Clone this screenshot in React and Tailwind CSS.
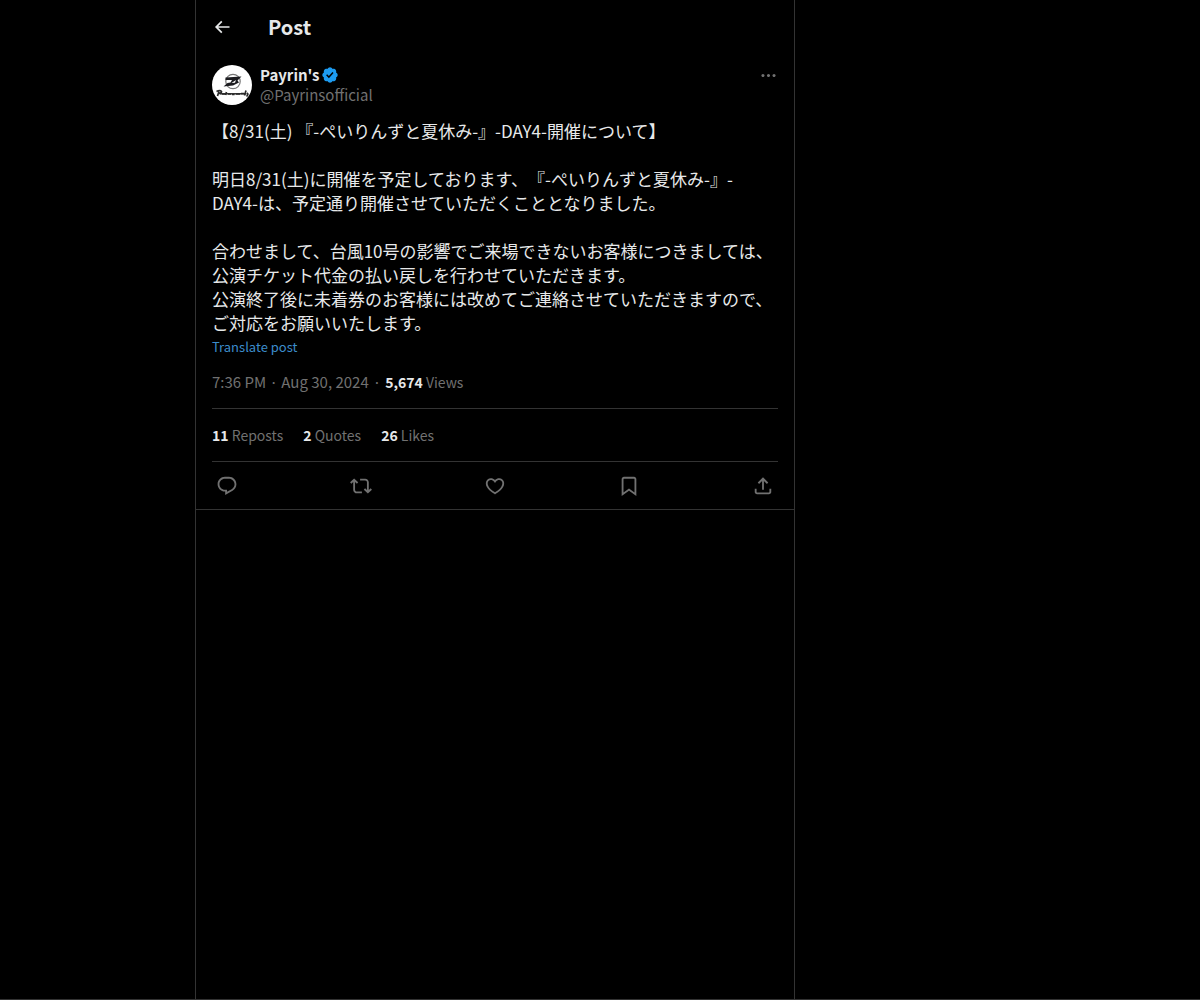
import clsx from "clsx";

const BODY = `【8/31(土) 『-ぺいりんずと夏休み-』-DAY4-開催について】

明日8/31(土)に開催を予定しております、『-ぺいりんずと夏休み-』-DAY4-は、予定通り開催させていただくこととなりました。

合わせまして、台風10号の影響でご来場できないお客様につきましては、公演チケット代金の払い戻しを行わせていただきます。
公演終了後に未着券のお客様には改めてご連絡させていただきますので、ご対応をお願いいたします。`;

const stats = [
  { count: "11", label: "Reposts" },
  { count: "2", label: "Quotes" },
  { count: "26", label: "Likes" },
];

const actions = [
  {
    name: "Reply",
    d: "M1.751 10c0-4.42 3.584-8 8.005-8h4.366c4.49 0 8.129 3.64 8.129 8.13 0 2.96-1.607 5.68-4.196 7.11l-8.054 4.46v-3.69h-.067c-4.49.1-8.183-3.51-8.183-8.01zm8.005-6c-3.317 0-6.005 2.69-6.005 6 0 3.37 2.77 6.08 6.138 6.01l.351-.01h1.761v2.3l5.087-2.81c1.951-1.08 3.163-3.13 3.163-5.36 0-3.39-2.744-6.13-6.129-6.13H9.756z",
  },
  {
    name: "Repost",
    d: "M4.5 3.88l4.432 4.14-1.364 1.46L5.5 7.55V16c0 1.1.896 2 2 2H13v2H7.5c-2.209 0-4-1.79-4-4V7.55L1.432 9.48.068 8.02 4.5 3.88zM16.5 6H11V4h5.5c2.209 0 4 1.79 4 4v8.45l2.068-1.93 1.364 1.46-4.432 4.14-4.432-4.14 1.364-1.46 2.068 1.93V8c0-1.1-.896-2-2-2z",
  },
  {
    name: "Like",
    d: "M16.697 5.5c-1.222-.06-2.679.51-3.89 2.16l-.805 1.09-.806-1.09C9.984 6.01 8.526 5.44 7.304 5.5c-1.243.07-2.349.78-2.91 1.91-.552 1.12-.633 2.78.479 4.82 1.074 1.97 3.257 4.27 7.129 6.61 3.87-2.34 6.052-4.64 7.126-6.61 1.111-2.04 1.03-3.7.477-4.82-.561-1.13-1.666-1.84-2.908-1.91zm4.187 7.69c-1.351 2.48-4.001 5.12-8.379 7.67l-.503.3-.504-.3c-4.379-2.55-7.029-5.19-8.382-7.67-1.36-2.5-1.41-4.86-.514-6.67.887-1.79 2.647-2.91 4.601-3.01 1.651-.09 3.368.56 4.798 2.01 1.429-1.45 3.146-2.1 4.796-2.01 1.954.1 3.714 1.22 4.601 3.01.896 1.81.846 4.17-.514 6.67z",
  },
  {
    name: "Bookmark",
    d: "M4 4.5C4 3.12 5.119 2 6.5 2h11C18.881 2 20 3.12 20 4.5v18.44l-8-5.71-8 5.71V4.5zM6.5 4c-.276 0-.5.22-.5.5v14.56l6-4.29 6 4.29V4.5c0-.28-.224-.5-.5-.5h-11z",
  },
  {
    name: "Share",
    d: "M12 2.59l5.7 5.7-1.41 1.42L13 6.41V16h-2V6.41l-3.3 3.3-1.41-1.42L12 2.59zM21 15l-.02 3.51c0 1.38-1.12 2.49-2.5 2.49H5.5C4.11 21 3 19.88 3 18.5V15h2v3.5c0 .28.22.5.5.5h12.98c.28 0 .5-.22.5-.5L19 15h2z",
  },
];

function Icon({ d, className }) {
  return (
    <svg viewBox="0 0 24 24" aria-hidden="true" className={clsx("fill-current", className)}>
      <path d={d} />
    </svg>
  );
}

function Avatar() {
  return (
    <svg viewBox="0 0 40 40" className="size-10 shrink-0" role="img" aria-label="Payrin's">
      <circle cx="20" cy="20" r="20" fill="#fff" />
      <circle cx="21" cy="16.5" r="7.2" fill="none" stroke="#777" strokeWidth="1.2" />
      <path d="M13.5 12.5 L29.5 11.5 L25.5 15.5 L27 17.5 L21 20.5 L11.5 21.5 L15.5 18 L18.5 17.5 L20 15 L13.5 15 Z" fill="#1c1c20" />
      <path d="M19.5 18 L24 15 L23 17.8 Z" fill="#fff" />
      <path
        d="M4.5 26.5 Q8 24.5 9.5 26.5 Q9.5 28.5 6.5 28.5 M7 26.5 L5.5 31 M10 29 h3 M14.5 27 l-1 3 M16 29 h3 M20 29.5 h2.5 M24 29 h4 M29 28.5 h3 M34 25.5 l-1.5 5 M35 28 Q37 29 34.5 31.5"
        fill="none"
        stroke="#2a2a2a"
        strokeWidth="1.7"
      />
      <path d="M8 28.8 H34.5" stroke="#2a2a2a" strokeWidth="1.5" />
    </svg>
  );
}

function VerifiedBadge() {
  return (
    <svg viewBox="0 0 22 22" className="size-[18px]" role="img" aria-label="Verified account">
      <path
        fill="#1d9bf0"
        d="M20.396 11c-.018-.646-.215-1.275-.57-1.816-.354-.54-.852-.972-1.438-1.246.223-.607.27-1.264.14-1.897-.131-.634-.437-1.218-.882-1.687-.47-.445-1.053-.75-1.687-.882-.633-.13-1.29-.083-1.897.14-.273-.587-.704-1.086-1.245-1.44S11.647 1.62 11 1.604c-.646.017-1.273.213-1.813.568s-.969.854-1.24 1.44c-.608-.223-1.267-.272-1.902-.14-.635.13-1.22.436-1.69.882-.445.47-.749 1.055-.878 1.688-.13.633-.08 1.29.144 1.896-.587.274-1.087.705-1.443 1.245-.356.54-.555 1.17-.574 1.817.02.647.218 1.276.574 1.817.356.54.856.972 1.443 1.245-.224.606-.274 1.263-.144 1.896.13.634.433 1.218.877 1.688.47.443 1.054.747 1.687.878.633.132 1.29.084 1.897-.136.274.586.705 1.084 1.246 1.439.54.354 1.17.551 1.816.569.647-.016 1.276-.213 1.817-.567s.972-.854 1.245-1.44c.604.239 1.266.296 1.903.164.636-.132 1.22-.447 1.68-.907.46-.46.776-1.044.908-1.681s.075-1.299-.165-1.903c.586-.274 1.084-.705 1.439-1.246.354-.54.551-1.17.569-1.816z"
      />
      <path fill="#000" d="M9.662 14.85l-3.429-3.428 1.293-1.302 2.072 2.072 4.4-4.794 1.347 1.246z" />
    </svg>
  );
}

function Header() {
  return (
    <header className="flex h-[53px] items-center px-4">
      <div className="w-14">
        <button type="button" aria-label="Back" className="block">
          <Icon className="size-5" d="M7.414 13l5.043 5.04-1.414 1.42L3.586 12l7.457-7.46 1.414 1.42L7.414 11H21v2H7.414z" />
        </button>
      </div>
      <h1 className="text-xl font-bold">Post</h1>
    </header>
  );
}

function Post() {
  return (
    <article className="border-b border-[#333333] px-4 pt-3">
      <div className="flex gap-2">
        <Avatar />
        <div className="flex-1 text-[15px] leading-5">
          <div className="flex items-center gap-px">
            <a href="#profile" className="font-bold">Payrin's</a>
            <VerifiedBadge />
          </div>
          <a href="#profile" className="block text-[#717171]">@Payrinsofficial</a>
        </div>
        <button type="button" aria-label="More" className="flex h-5 items-center text-[#717171]">
          <Icon
            className="size-[19px]"
            d="M3 12c0-1.1.9-2 2-2s2 .9 2 2-.9 2-2 2-2-.9-2-2zm9 2c1.1 0 2-.9 2-2s-.9-2-2-2-2 .9-2 2 .9 2 2 2zm7 0c1.1 0 2-.9 2-2s-.9-2-2-2-2 .9-2 2 .9 2 2 2z"
          />
        </button>
      </div>

      <p lang="ja" className="mt-3.5 text-[17px] leading-6 whitespace-pre-wrap [text-spacing-trim:space-all]">{BODY}</p>
      <button type="button" className="block text-[13px] leading-6 text-[#3c8ccb]">Translate post</button>

      <div className="pt-3 pb-4 text-[15px] leading-[21px] text-[#717171]">
        <a href="#post">7:36 PM · Aug 30, 2024</a>
        <span className="px-1">·</span>
        <span className="text-sm leading-5"><b className="text-[#e7e9ea]">5,674</b> Views</span>
      </div>

      <div className="flex gap-5 border-y border-[#333333] py-4 text-sm leading-5 text-[#717171]">
        {stats.map((s) => (
          <a key={s.label} href="#stats">
            <b className="text-[#e7e9ea]">{s.count}</b> {s.label}
          </a>
        ))}
      </div>

      <div className="flex h-[47px] items-center justify-between text-[#717171]">
        {actions.map((a) => (
          <button key={a.name} type="button" aria-label={a.name} className="flex w-[30px] justify-center">
            <Icon d={a.d} className="size-[22px]" />
          </button>
        ))}
      </div>
    </article>
  );
}

export default function App() {
  return (
    <div className="flex min-h-screen border-b border-[#333333] bg-black pl-[195px] font-['Noto_Sans_CJK_JP',sans-serif] text-[#e7e9ea]">
      <main className="w-full max-w-[600px] border-x border-[#333333]">
        <Header />
        <Post />
      </main>
    </div>
  );
}
